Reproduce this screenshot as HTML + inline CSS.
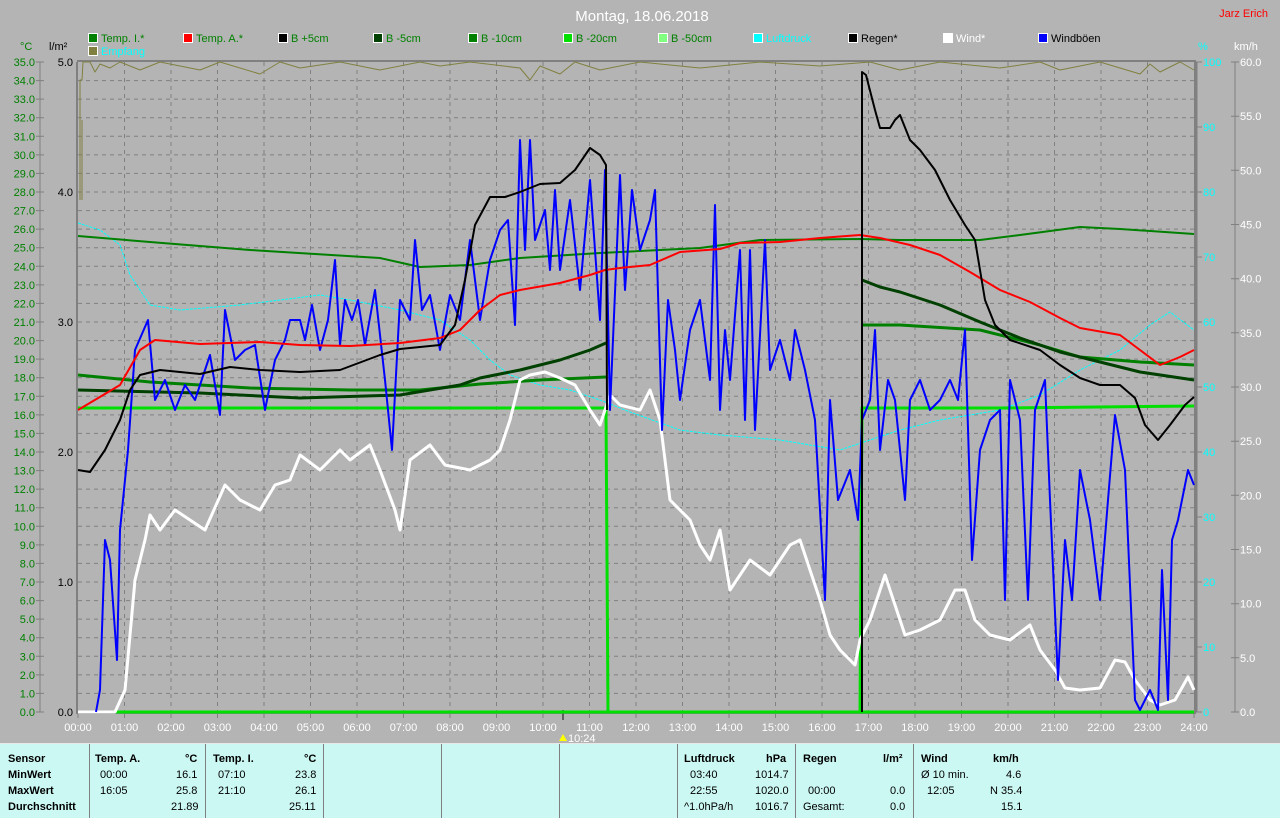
<!DOCTYPE html>
<html><head><meta charset="utf-8"><style>
body{margin:0;width:1280px;height:817px;background:#b4b4b4;overflow:hidden;font-family:"Liberation Sans",sans-serif}
svg{position:absolute;left:0;top:0}
.tbl{position:absolute;left:0;top:743px;width:1280px;height:74px;background:#ccf8f4;border-top:1px solid #e8e8e8}
.sep{position:absolute;top:0;width:1px;height:74px;background:#808080}
.t{position:absolute;font-size:11px;color:#000;white-space:nowrap}
.b{font-weight:bold}
</style></head><body>
<svg width="1280" height="743" font-size="11" font-family="Liberation Sans, sans-serif">
<text x="642" y="21" fill="#fff" font-size="15" text-anchor="middle">Montag, 18.06.2018</text>
<text x="1268" y="17" fill="#f00" font-size="11" text-anchor="end">Jarz Erich</text>
<g stroke="#fff" stroke-width="1">
<rect x="88.5" y="33.5" width="9" height="9" fill="#008000"/>
<rect x="183.5" y="33.5" width="9" height="9" fill="#f00"/>
<rect x="278.5" y="33.5" width="9" height="9" fill="#000"/>
<rect x="373.5" y="33.5" width="9" height="9" fill="#004000"/>
<rect x="468.5" y="33.5" width="9" height="9" fill="#008000"/>
<rect x="563.5" y="33.5" width="9" height="9" fill="#00e000"/>
<rect x="658.5" y="33.5" width="9" height="9" fill="#80ff80"/>
<rect x="753.5" y="33.5" width="9" height="9" fill="#00ffff"/>
<rect x="848.5" y="33.5" width="9" height="9" fill="#000"/>
<rect x="943.5" y="33.5" width="9" height="9" fill="#fff"/>
<rect x="1038.5" y="33.5" width="9" height="9" fill="#0000ff"/>
<rect x="88.5" y="46.5" width="9" height="9" fill="#808040"/>
</g>
<g fill="#008000">
<text x="101" y="42">Temp. I.*</text><text x="196" y="42">Temp. A.*</text><text x="291" y="42">B +5cm</text><text x="386" y="42">B -5cm</text><text x="481" y="42">B -10cm</text><text x="576" y="42">B -20cm</text><text x="671" y="42">B -50cm</text>
</g>
<text x="766" y="42" fill="#00ffff">Luftdruck</text>
<text x="861" y="42" fill="#000">Regen*</text>
<text x="956" y="42" fill="#fff">Wind*</text>
<text x="1051" y="42" fill="#000">Windböen</text>
<text x="101" y="55" fill="#00ffff">Empfang</text>
<text x="20" y="50" fill="#008000">°C</text>
<text x="49" y="50" fill="#000">l/m²</text>
<text x="1198" y="50" fill="#00ffff">%</text>
<text x="1234" y="50" fill="#fff">km/h</text>
<path stroke="#808080" stroke-dasharray="4 4" fill="none" d="M78 80.6H1194M78 99.1H1194M78 117.7H1194M78 136.3H1194M78 154.9H1194M78 173.4H1194M78 192H1194M78 210.6H1194M78 229.1H1194M78 247.7H1194M78 266.3H1194M78 284.9H1194M78 303.4H1194M78 322H1194M78 340.6H1194M78 359.1H1194M78 377.7H1194M78 396.3H1194M78 414.9H1194M78 433.4H1194M78 452H1194M78 470.6H1194M78 489.1H1194M78 507.7H1194M78 526.3H1194M78 544.9H1194M78 563.4H1194M78 582H1194M78 600.6H1194M78 619.1H1194M78 637.7H1194M78 656.3H1194M78 674.9H1194M78 693.4H1194
M124.5 62V712M171 62V712M217.5 62V712M264 62V712M310.5 62V712M357 62V712M403.5 62V712M450 62V712M496.5 62V712M543 62V712M589.5 62V712M636 62V712M682.5 62V712M729 62V712M775.5 62V712M822 62V712M868.5 62V712M915 62V712M961.5 62V712M1008 62V712M1054.5 62V712M1101 62V712M1147.5 62V712"/>
<path stroke="#808080" stroke-width="2" fill="none" d="M77 62V713H1195V61H77"/>
<path stroke="#808080" fill="none" d="M40 62V712M1196 62V712M1197 62V712M1235 62V712"/>
<path stroke="#808080" fill="none" d="M36 62h8M36 80.6h8M36 99.1h8M36 117.7h8M36 136.3h8M36 154.9h8M36 173.4h8M36 192h8M36 210.6h8M36 229.1h8M36 247.7h8M36 266.3h8M36 284.9h8M36 303.4h8M36 322h8M36 340.6h8M36 359.1h8M36 377.7h8M36 396.3h8M36 414.9h8M36 433.4h8M36 452h8M36 470.6h8M36 489.1h8M36 507.7h8M36 526.3h8M36 544.9h8M36 563.4h8M36 582h8M36 600.6h8M36 619.1h8M36 637.7h8M36 656.3h8M36 674.9h8M36 693.4h8M36 712h8
M1196 62h6M1196 127h6M1196 192h6M1196 257h6M1196 322h6M1196 387h6M1196 452h6M1196 517h6M1196 582h6M1196 647h6M1196 712h6
M1231 62h8M1231 116.2h8M1231 170.3h8M1231 224.5h8M1231 278.7h8M1231 332.8h8M1231 387h8M1231 441.2h8M1231 495.3h8M1231 549.5h8M1231 603.7h8M1231 657.8h8M1231 712h8
M78 713v5M124.5 713v5M171 713v5M217.5 713v5M264 713v5M310.5 713v5M357 713v5M403.5 713v5M450 713v5M496.5 713v5M543 713v5M589.5 713v5M636 713v5M682.5 713v5M729 713v5M775.5 713v5M822 713v5M868.5 713v5M915 713v5M961.5 713v5M1008 713v5M1054.5 713v5M1101 713v5M1147.5 713v5M1194 713v5"/>
<g fill="#008000" text-anchor="end">
<text x="35" y="66">35.0</text><text x="35" y="84.6">34.0</text><text x="35" y="103.1">33.0</text><text x="35" y="121.7">32.0</text><text x="35" y="140.3">31.0</text><text x="35" y="158.9">30.0</text><text x="35" y="177.4">29.0</text><text x="35" y="196">28.0</text><text x="35" y="214.6">27.0</text><text x="35" y="233.1">26.0</text><text x="35" y="251.7">25.0</text><text x="35" y="270.3">24.0</text><text x="35" y="288.9">23.0</text><text x="35" y="307.4">22.0</text><text x="35" y="326">21.0</text><text x="35" y="344.6">20.0</text><text x="35" y="363.1">19.0</text><text x="35" y="381.7">18.0</text><text x="35" y="400.3">17.0</text><text x="35" y="418.9">16.0</text><text x="35" y="437.4">15.0</text><text x="35" y="456">14.0</text><text x="35" y="474.6">13.0</text><text x="35" y="493.1">12.0</text><text x="35" y="511.7">11.0</text><text x="35" y="530.3">10.0</text><text x="35" y="548.9">9.0</text><text x="35" y="567.4">8.0</text><text x="35" y="586">7.0</text><text x="35" y="604.6">6.0</text><text x="35" y="623.1">5.0</text><text x="35" y="641.7">4.0</text><text x="35" y="660.3">3.0</text><text x="35" y="678.9">2.0</text><text x="35" y="697.4">1.0</text><text x="35" y="716">0.0</text>
</g>
<g fill="#000" text-anchor="end">
<text x="73" y="66">5.0</text><text x="73" y="196">4.0</text><text x="73" y="326">3.0</text><text x="73" y="456">2.0</text><text x="73" y="586">1.0</text><text x="73" y="716">0.0</text>
</g>
<g fill="#00ffff">
<text x="1203" y="66">100</text><text x="1203" y="131">90</text><text x="1203" y="196">80</text><text x="1203" y="261">70</text><text x="1203" y="326">60</text><text x="1203" y="391">50</text><text x="1203" y="456">40</text><text x="1203" y="521">30</text><text x="1203" y="586">20</text><text x="1203" y="651">10</text><text x="1203" y="716">0</text>
</g>
<g fill="#fff">
<text x="1240" y="66">60.0</text><text x="1240" y="120.2">55.0</text><text x="1240" y="174.3">50.0</text><text x="1240" y="228.5">45.0</text><text x="1240" y="282.7">40.0</text><text x="1240" y="336.8">35.0</text><text x="1240" y="391">30.0</text><text x="1240" y="445.2">25.0</text><text x="1240" y="499.3">20.0</text><text x="1240" y="553.5">15.0</text><text x="1240" y="607.7">10.0</text><text x="1240" y="661.8">5.0</text><text x="1240" y="716">0.0</text>
</g>
<g fill="#fff" text-anchor="middle">
<text x="78" y="731">00:00</text><text x="124.5" y="731">01:00</text><text x="171" y="731">02:00</text><text x="217.5" y="731">03:00</text><text x="264" y="731">04:00</text><text x="310.5" y="731">05:00</text><text x="357" y="731">06:00</text><text x="403.5" y="731">07:00</text><text x="450" y="731">08:00</text><text x="496.5" y="731">09:00</text><text x="543" y="731">10:00</text><text x="589.5" y="731">11:00</text><text x="636" y="731">12:00</text><text x="682.5" y="731">13:00</text><text x="729" y="731">14:00</text><text x="775.5" y="731">15:00</text><text x="822" y="731">16:00</text><text x="868.5" y="731">17:00</text><text x="915" y="731">18:00</text><text x="961.5" y="731">19:00</text><text x="1008" y="731">20:00</text><text x="1054.5" y="731">21:00</text><text x="1101" y="731">22:00</text><text x="1147.5" y="731">23:00</text><text x="1194" y="731">24:00</text>
</g>
<path d="M563 710v10" stroke="#606060" stroke-width="2"/>
<path d="M563 734l4 7h-8z" fill="#ff0"/>
<text x="568" y="742" fill="#fff">10:24</text>
<g fill="none" stroke-linejoin="round">
<polyline stroke="#808040" points="80,200 80,80 82,80 83,62 90,62 95,72 100,64 110,68 120,62 140,70 160,62 200,70 220,62 260,74 280,62 300,68 340,62 380,70 420,62 440,66 470,62 520,68 530,80 540,66 560,74 575,62 600,70 640,62 700,68 760,62 820,66 870,62 900,70 940,62 1000,68 1040,62 1060,70 1100,62 1140,74 1150,64 1160,72 1180,62 1194,70"/>
<polyline stroke="#808040" points="82,200 82,120"/>
<polyline stroke="#00ffff" stroke-dasharray="3 1" points="78,223 100,230 120,245 130,275 150,305 180,310 240,305 280,300 320,295 350,300 400,310 440,320 470,340 490,360 510,375 540,385 570,390 600,400 630,412 680,430 720,435 780,440 840,450 870,440 900,430 940,420 1000,410 1040,395 1080,370 1120,350 1150,325 1170,312 1194,330"/>
<polyline stroke="#00e000" stroke-width="3" points="78,712 1194,712"/>
<polyline stroke="#00e000" stroke-width="3" points="78,408 606,408 608,712 860,712 862,408 1000,408 1194,406"/>
<polyline stroke="#008000" stroke-width="3" points="78,375 150,382 250,388 350,390 420,390 480,384 540,380 606,377"/>
<polyline stroke="#008000" stroke-width="3" points="862,325 900,325 980,330 1040,345 1080,357 1140,362 1194,365"/>
<polyline stroke="#004000" stroke-width="3" points="78,390 200,393 300,398 400,395 460,385 480,378 520,370 560,360 590,350 606,343"/>
<polyline stroke="#004000" stroke-width="3" points="862,280 880,287 900,292 940,305 980,322 1020,338 1060,352 1100,362 1140,372 1194,380"/>
<polyline stroke="#008000" stroke-width="2" points="78,236 150,242 250,250 380,258 420,267 470,265 520,258 600,253 700,248 760,240 860,239 900,240 980,240 1020,235 1080,227 1120,229 1194,234"/>
<polyline stroke="#fff" stroke-width="3" points="78,712 115,712 125,690 135,580 145,540 150,515 160,530 175,510 190,520 205,530 225,485 240,500 260,510 275,485 290,480 300,455 320,470 340,450 350,460 370,445 380,470 395,510 400,530 410,460 430,445 445,465 470,470 490,460 500,450 510,420 520,380 530,375 545,372 560,378 575,385 590,410 600,425 610,395 620,405 640,410 650,390 660,420 670,500 690,520 700,545 710,560 720,530 730,590 750,560 770,575 790,545 800,540 810,570 820,600 830,635 840,650 855,665 860,640 870,620 880,590 885,575 895,605 905,635 920,630 940,620 955,590 965,590 975,620 990,635 1010,640 1030,625 1040,650 1055,670 1065,688 1080,690 1100,688 1115,660 1125,662 1135,680 1150,700 1160,705 1175,700 1188,677 1194,690"/>
<polyline stroke="#0000ff" stroke-width="2" points="96,712 100,690 105,540 110,560 117,660 120,530 128,450 135,350 148,320 155,400 165,380 175,410 185,385 195,400 210,355 220,415 225,310 235,360 245,350 255,345 265,410 275,360 285,340 290,320 300,320 305,340 312,305 320,350 328,320 335,260 340,345 345,300 352,320 358,300 365,345 375,290 385,380 392,450 400,300 410,320 415,240 422,310 430,295 440,350 450,295 460,320 470,240 480,320 490,260 500,230 508,220 515,325 520,140 525,250 530,140 535,240 545,210 550,270 555,190 560,270 570,200 580,290 590,180 600,320 605,170 610,410 620,175 625,290 632,190 640,250 650,220 655,190 662,430 668,300 675,350 680,400 690,330 700,300 710,380 715,205 720,410 725,330 730,380 740,250 745,420 750,250 755,430 765,240 770,370 780,340 790,380 795,330 805,370 815,420 825,600 830,400 838,500 850,470 858,520 862,420 870,400 875,330 880,450 888,380 895,400 905,500 910,400 920,380 930,410 940,400 950,380 958,400 965,330 972,560 980,450 990,420 1000,410 1005,600 1010,380 1020,420 1028,600 1035,410 1045,380 1050,500 1058,680 1065,540 1072,600 1080,470 1090,520 1100,600 1108,500 1115,415 1125,470 1135,700 1140,710 1150,690 1158,710 1162,570 1168,700 1172,540 1178,520 1188,470 1194,485"/>
<polyline stroke="#f00" stroke-width="2" points="78,410 120,385 140,350 155,340 200,344 260,342 300,345 350,346 400,343 440,338 460,330 480,310 500,295 520,290 560,283 590,275 605,270 620,268 650,265 680,252 720,249 740,243 780,242 820,238 860,235 880,238 910,245 940,255 970,272 1000,290 1030,302 1060,318 1080,328 1120,335 1140,350 1160,365 1180,357 1194,350"/>
<polyline stroke="#000" stroke-width="2" points="78,470 90,472 105,450 120,420 130,390 140,375 160,370 200,374 230,367 260,370 300,372 340,370 380,355 400,349 440,345 455,325 465,280 475,225 490,197 505,197 520,192 540,184 560,183 575,170 590,148 600,155 606,165 607,410"/>
<polyline stroke="#000" stroke-width="2" points="862,712 862,72 866,75 875,110 880,128 890,128 895,120 900,115 910,140 920,150 935,170 950,200 965,225 975,240 985,300 995,325 1010,340 1040,350 1060,365 1080,378 1100,385 1120,385 1135,398 1145,425 1158,440 1170,425 1185,405 1194,397"/>
</g>
</svg>
<div class="tbl">
<div class="sep" style="left:89px"></div><div class="sep" style="left:205px"></div><div class="sep" style="left:323px"></div><div class="sep" style="left:441px"></div><div class="sep" style="left:559px"></div><div class="sep" style="left:677px"></div><div class="sep" style="left:795px"></div><div class="sep" style="left:913px"></div>
<div class="t b" style="left:8px;top:9px">Sensor</div>
<div class="t b" style="left:8px;top:25px">MinWert</div>
<div class="t b" style="left:8px;top:41px">MaxWert</div>
<div class="t b" style="left:8px;top:57px">Durchschnitt</div>
<div class="t b" style="left:95px;top:9px">Temp. A.</div><div class="t b" style="left:185px;top:9px">°C</div>
<div class="t" style="left:100px;top:25px">00:00</div><div class="t" style="left:176px;top:25px">16.1</div>
<div class="t" style="left:100px;top:41px">16:05</div><div class="t" style="left:176px;top:41px">25.8</div>
<div class="t" style="left:171px;top:57px">21.89</div>
<div class="t b" style="left:213px;top:9px">Temp. I.</div><div class="t b" style="left:304px;top:9px">°C</div>
<div class="t" style="left:218px;top:25px">07:10</div><div class="t" style="left:295px;top:25px">23.8</div>
<div class="t" style="left:218px;top:41px">21:10</div><div class="t" style="left:295px;top:41px">26.1</div>
<div class="t" style="left:289px;top:57px">25.11</div>
<div class="t b" style="left:684px;top:9px">Luftdruck</div><div class="t b" style="left:766px;top:9px">hPa</div>
<div class="t" style="left:690px;top:25px">03:40</div><div class="t" style="left:755px;top:25px">1014.7</div>
<div class="t" style="left:690px;top:41px">22:55</div><div class="t" style="left:755px;top:41px">1020.0</div>
<div class="t" style="left:684px;top:57px">^1.0hPa/h</div><div class="t" style="left:755px;top:57px">1016.7</div>
<div class="t b" style="left:803px;top:9px">Regen</div><div class="t b" style="left:883px;top:9px">l/m²</div>
<div class="t" style="left:808px;top:41px">00:00</div><div class="t" style="left:890px;top:41px">0.0</div>
<div class="t" style="left:803px;top:57px">Gesamt:</div><div class="t" style="left:890px;top:57px">0.0</div>
<div class="t b" style="left:921px;top:9px">Wind</div><div class="t b" style="left:993px;top:9px">km/h</div>
<div class="t" style="left:921px;top:25px">Ø 10 min.</div><div class="t" style="left:1006px;top:25px">4.6</div>
<div class="t" style="left:927px;top:41px">12:05</div><div class="t" style="left:990px;top:41px">N 35.4</div>
<div class="t" style="left:1001px;top:57px">15.1</div>
</div>
</body></html>
